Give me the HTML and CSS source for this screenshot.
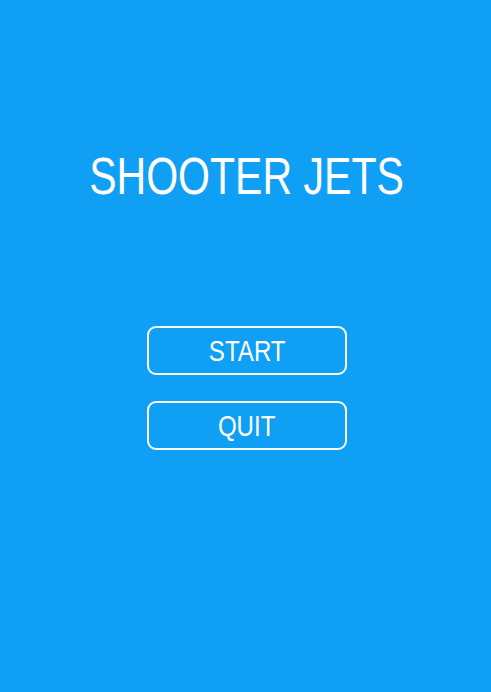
FILE: index.html
```html
<!DOCTYPE html>
<html>
<head>
<meta charset="utf-8">
<link rel="stylesheet" href="styles.css">
</head>
<body>
<main class="menu">
  <h1 class="title"><span class="narrow">SHOOTER JETS</span></h1>
  <div class="buttons">
    <button class="btn"><span class="narrow">START</span></button>
    <button class="btn"><span class="narrow">QUIT</span></button>
  </div>
</main>
</body>
</html>
```
FILE: styles.css
```css
html, body {
  margin: 0;
  padding: 0;
  height: 100%;
  background: #0fa0f6;
}
.menu {
  display: flex;
  flex-direction: column;
  align-items: center;
  padding-left: 3px;
  font-family: "Liberation Sans", Arial, sans-serif;
  color: #fff;
}
.narrow {
  display: inline-block;
  transform: scaleX(0.805);
}
.title {
  margin: 147px 0 0;
  font-size: 51px;
  font-weight: normal;
  line-height: 60px;
  white-space: nowrap;
}
.buttons {
  display: flex;
  flex-direction: column;
  gap: 26px;
  margin-top: 119px;
}
.btn {
  width: 200px;
  height: 49px;
  border: 2px solid #fff;
  border-radius: 9px;
  background: transparent;
  color: #fff;
  font-family: inherit;
  font-size: 29px;
  padding: 2px 0 0;
  line-height: 1;
  white-space: nowrap;
}
.btn .narrow {
  transform: scaleX(0.83);
}
```
